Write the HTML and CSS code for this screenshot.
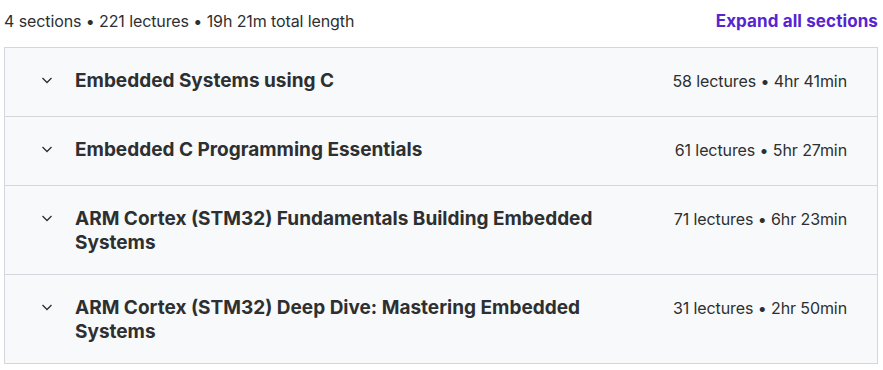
FILE: index.html
```html
<!DOCTYPE html>
<html lang="en">
<head>
    <meta charset="UTF-8">
    <meta name="viewport" content="width=device-width, initial-scale=1.0">
    <title>Course content</title>
    <link rel="stylesheet" href="styles.css">
</head>
<body>
    <div class="curriculum">
        <div class="curriculum-header">
            <span class="stats">4 sections • 221 lectures • 19h 21m total length</span>
            <button class="expand-all">Expand all sections</button>
        </div>

        <div class="sections">
            <div class="section">
                <svg class="chevron" viewBox="0 0 12 12" width="12" height="12"><path d="M1.5 4l4.5 4.5 4.5-4.5" fill="none" stroke="currentColor" stroke-width="1.3"/></svg>
                <h3 class="section-title">Embedded Systems using C</h3>
                <span class="section-meta">58 lectures • 4hr 41min</span>
            </div>
            <div class="section">
                <svg class="chevron" viewBox="0 0 12 12" width="12" height="12"><path d="M1.5 4l4.5 4.5 4.5-4.5" fill="none" stroke="currentColor" stroke-width="1.3"/></svg>
                <h3 class="section-title">Embedded C Programming Essentials</h3>
                <span class="section-meta">61 lectures • 5hr 27min</span>
            </div>
            <div class="section">
                <svg class="chevron" viewBox="0 0 12 12" width="12" height="12"><path d="M1.5 4l4.5 4.5 4.5-4.5" fill="none" stroke="currentColor" stroke-width="1.3"/></svg>
                <h3 class="section-title">ARM Cortex (STM32) Fundamentals Building Embedded Systems</h3>
                <span class="section-meta">71 lectures • 6hr 23min</span>
            </div>
            <div class="section">
                <svg class="chevron" viewBox="0 0 12 12" width="12" height="12"><path d="M1.5 4l4.5 4.5 4.5-4.5" fill="none" stroke="currentColor" stroke-width="1.3"/></svg>
                <h3 class="section-title">ARM Cortex (STM32) Deep Dive: Mastering Embedded Systems</h3>
                <span class="section-meta">31 lectures • 2hr 50min</span>
            </div>
        </div>
    </div>
</body>
</html>
```

FILE: styles.css
```css
* {
    margin: 0;
    padding: 0;
    box-sizing: border-box;
}

body {
    background-color: #fff;
    color: #2d2f31;
    font-family: 'Inter', 'Noto Sans', sans-serif;
}

.curriculum {
    width: 878px;
    padding-left: 4px;
}

/* Header */
.curriculum-header {
    display: flex;
    justify-content: space-between;
    align-items: center;
    height: 47px;
    padding-bottom: 6px;
}

.stats {
    font-size: 16px;
    color: #2d2f31;
    letter-spacing: -0.1px;
}

.expand-all {
    background: none;
    border: none;
    font-family: inherit;
    font-size: 17px;
    font-weight: 700;
    color: #5624d0;
    cursor: pointer;
    letter-spacing: 0.1px;
}

/* Sections */
.sections {
    border: 1px solid #d1d7dc;
    border-bottom: none;
}

.section {
    display: flex;
    align-items: flex-start;
    gap: 10px;
    min-height: 69px;
    padding: 21px 30px 19px 36px;
    background-color: #f7f9fa;
    border-bottom: 1px solid #d1d7dc;
}

.chevron {
    flex: none;
    color: #2d2f31;
    margin: 5px 12px 0 0;
}

.section-title {
    flex: 1;
    max-width: 530px;
    font-size: 19px;
    font-weight: 700;
    line-height: 24px;
}

.section-meta {
    margin-left: auto;
    font-size: 16px;
    line-height: 24px;
    color: #2d2f31;
    letter-spacing: -0.1px;
    white-space: nowrap;
}
```
